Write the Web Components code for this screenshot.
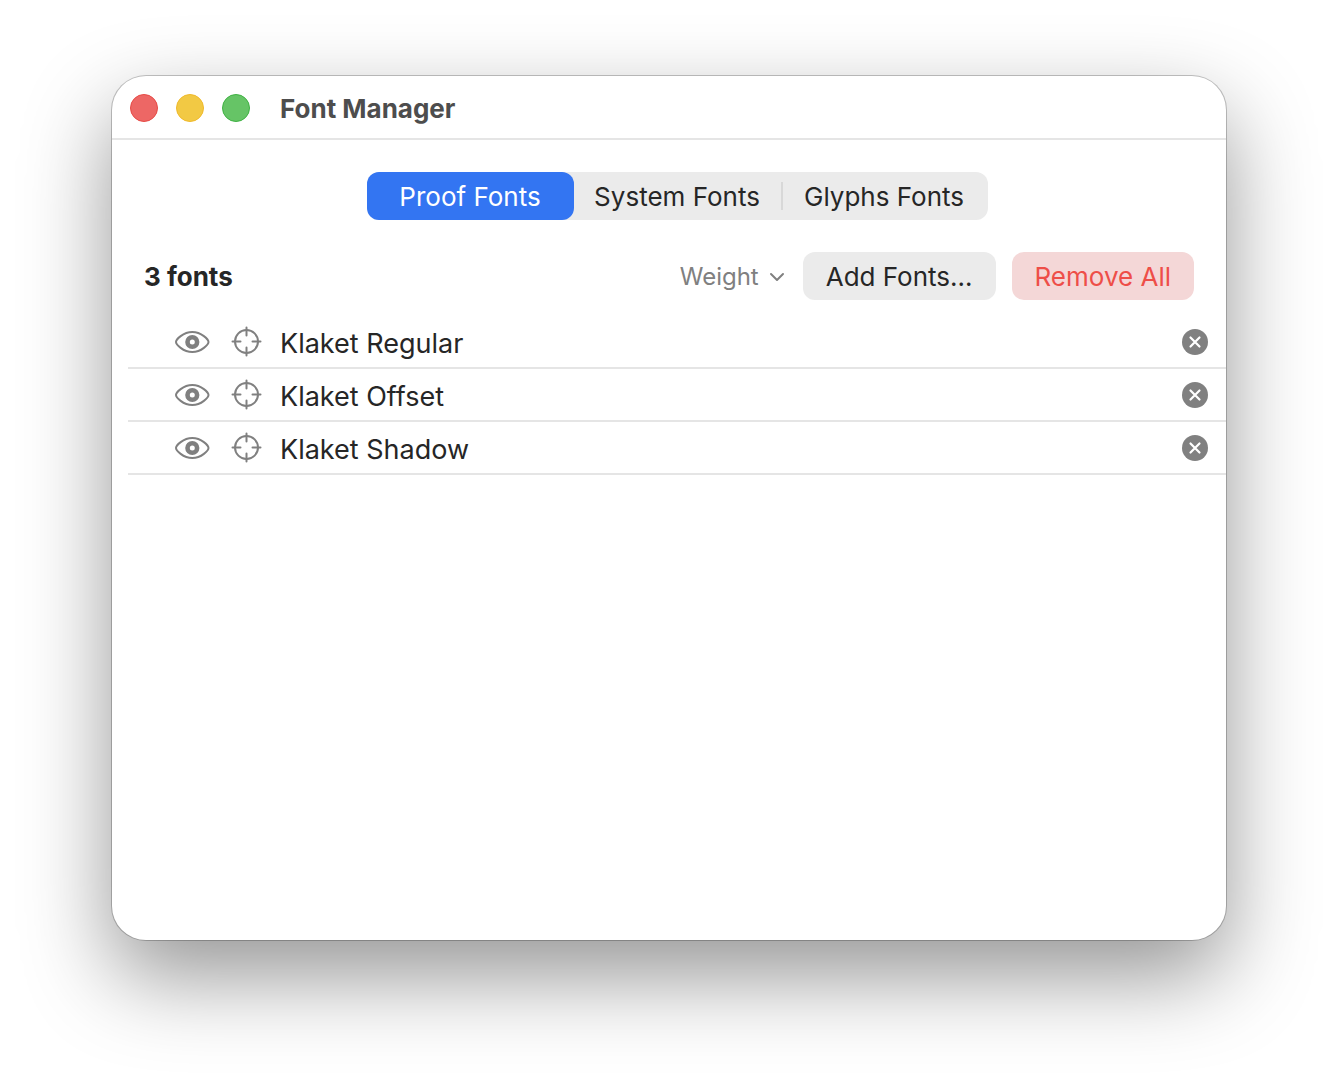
<!DOCTYPE html>
<html lang="en">
<head>
<meta charset="utf-8">
<title>Font Manager</title>
<style>
    html {
        height: 100%;
    }
    body {
        box-sizing: border-box;
        min-height: 100%;
        margin: 0;
        padding: 76px 112px 148px;
        display: flex;
        background: #fff;
        color: #262626;
        font: 26px/32px Inter, "Liberation Sans", sans-serif;
    }
</style>
</head>
<body>
<app-window heading="Font Manager">
    <segmented-control label="Font source">
        <segment-button selected>Proof Fonts</segment-button>
        <segment-button>System Fonts</segment-button>
        <segment-button divided>Glyphs Fonts</segment-button>
    </segmented-control>
    <font-toolbar>
        <span slot="count">3 fonts</span>
        <sort-select label="Sort fonts by" value="Weight"></sort-select>
        <push-button>Add Fonts…</push-button>
        <push-button kind="danger">Remove All</push-button>
    </font-toolbar>
    <font-list>
        <font-row>Klaket Regular</font-row>
        <font-row>Klaket Offset</font-row>
        <font-row>Klaket Shadow</font-row>
    </font-list>
</app-window>

<template id="app-window">
    <style>
        :host {
            flex: 1;
            min-width: 0;
            display: flex;
            flex-direction: column;
            border-radius: 34px;
            background: #fff;
            box-shadow: 0 0 0 1px rgba(0, 0, 0, .22), 0 36px 88px rgba(0, 0, 0, .42);
            overflow: hidden;
        }
        header {
            display: flex;
            align-items: center;
            height: 60px;
            padding: 2px 18px 0;
            border-bottom: 2px solid #e5e5e5;
        }
        .lights {
            display: flex;
            gap: 18px;
            margin-right: 30px;
        }
        .lights button {
            width: 28px;
            height: 28px;
            padding: 0;
            border: 1px solid #e64a46;
            border-radius: 50%;
            background: #ed6765;
        }
        .lights .minimize {
            border-color: #efb92b;
            background: #f2c944;
        }
        .lights .zoom {
            border-color: #3fb143;
            background: #66c466;
        }
        h1 {
            margin: 0;
            padding-top: 2px;
            color: #4d4d4d;
            font-size: 26px;
            font-weight: 700;
        }
        main {
            display: flex;
            flex-direction: column;
            padding: 32px 0 0 16px;
        }
    </style>
    <header>
        <div class="lights">
            <button class="close" aria-label="Close"></button>
            <button class="minimize" aria-label="Minimize"></button>
            <button class="zoom" aria-label="Zoom"></button>
        </div>
        <h1></h1>
    </header>
    <main><slot></slot></main>
</template>

<template id="segmented-control">
    <style>
        :host {
            display: grid;
            grid-auto-flow: column;
            grid-auto-columns: 207px;
            align-self: center;
            border-radius: 12px;
            background: #ebebeb;
        }
    </style>
    <slot></slot>
</template>

<template id="segment-button">
    <style>
        :host {
            display: flex;
            align-items: center;
        }
        :host([divided])::before {
            content: "";
            width: 2px;
            height: 28px;
            margin-right: -2px;
            background: #d8d8d8;
        }
        button {
            flex: 1;
            height: 48px;
            padding: 2px 0 0;
            border: 0;
            border-radius: 12px;
            background: none;
            color: inherit;
            font: inherit;
            white-space: nowrap;
        }
        :host([selected]) button {
            background: #3375f2;
            color: #fff;
        }
    </style>
    <button><slot></slot></button>
</template>

<template id="font-toolbar">
    <style>
        :host {
            display: flex;
            align-items: center;
            gap: 16px;
            padding: 32px 32px 16px 16px;
        }
        .count {
            flex: 1;
            padding-top: 2px;
            font-weight: 700;
        }
    </style>
    <div class="count"><slot name="count"></slot></div>
    <slot></slot>
</template>

<template id="sort-select">
    <style>
        :host {
            display: grid;
            align-items: center;
            color: #808080;
            font-size: 24px;
        }
        select,
        svg {
            grid-area: 1 / 1;
        }
        select {
            appearance: none;
            height: 48px;
            padding: 2px 28px 0 0;
            border: 0;
            background: none;
            color: inherit;
            font: inherit;
        }
        svg {
            justify-self: end;
            margin: 2px 2px 0 0;
            pointer-events: none;
        }
    </style>
    <select><option></option></select>
    <svg width="16" height="10" viewBox="0 0 16 10" fill="none" stroke="currentColor" stroke-width="2" stroke-linecap="round" stroke-linejoin="round">
        <path d="M2 2l6 6 6-6"/>
    </svg>
</template>

<template id="push-button">
    <style>
        :host {
            display: block;
        }
        button {
            height: 48px;
            padding: 2px 23px 0;
            border: 0;
            border-radius: 12px;
            background: #ebebeb;
            color: inherit;
            font: inherit;
            white-space: nowrap;
        }
        :host([kind="danger"]) button {
            background: #f4d7d7;
            color: #ee4e48;
        }
    </style>
    <button><slot></slot></button>
</template>

<template id="font-list">
    <style>
        :host {
            display: block;
        }
    </style>
    <slot></slot>
</template>

<template id="font-row">
    <style>
        :host {
            display: flex;
            align-items: center;
            height: 51px;
            padding: 0 18px 0 46px;
            border-bottom: 2px solid #e5e5e5;
            font-size: 27px;
        }
        button {
            display: flex;
            padding: 0;
            border: 0;
            background: none;
            color: #808080;
        }
        .target {
            margin: 0 18px 0 20px;
        }
        .name {
            flex: 1;
            padding-top: 4px;
        }
    </style>
    <button class="preview" aria-label="Preview">
        <svg width="36" height="32" viewBox="0 0 36 32" fill="none" stroke="currentColor" stroke-width="2">
            <path d="M2 16C2 13.6 9 6 18.300 6S34.500 13.600 34.500 16S27.600 26 18.300 26S2 18.400 2 16Z"/>
            <circle cx="18.300" cy="16" r="4.800" stroke-width="4.600"/>
        </svg>
    </button>
    <button class="target" aria-label="Target">
        <svg width="32" height="32" viewBox="0 0 32 32" fill="none" stroke="currentColor" stroke-width="2" stroke-linecap="round">
            <circle cx="16.500" cy="15.500" r="11.500"/>
            <path d="M16.500 1.500v8M16.500 21.500v8M2.500 15.500h8M22.500 15.500h8"/>
        </svg>
    </button>
    <span class="name"><slot></slot></span>
    <button class="remove" aria-label="Remove">
        <svg width="26" height="26" viewBox="0 0 26 26">
            <circle cx="13" cy="13" r="13" fill="currentColor"/>
            <path d="M8.500 8.500l9 9M17.500 8.500l-9 9" stroke="#fff" stroke-width="2.200" stroke-linecap="round"/>
        </svg>
    </button>
</template>

<script>
(() => {
    // attaches a shadow root holding a copy of the template named after the tag
    class TemplateElement extends HTMLElement {
        constructor() {
            super()
            const template = document.getElementById(this.localName)
            const shadowRoot = this.attachShadow({mode: 'open'})
            shadowRoot.appendChild(template.content.cloneNode(true))
        }
    }

    class AppWindow extends TemplateElement {
        connectedCallback() {
            this.shadowRoot.querySelector('h1').textContent = this.getAttribute('heading')
        }
    }

    class SegmentedControl extends TemplateElement {
        connectedCallback() {
            this.setAttribute('role', 'group')
            this.setAttribute('aria-label', this.getAttribute('label'))
            this.addEventListener('click', e => {
                const clicked = e.target.closest('segment-button')
                if (!clicked) {
                    return
                }
                for (const segment of this.children) {
                    segment.toggleAttribute('selected', segment === clicked)
                }
            })
        }
    }

    class SegmentButton extends TemplateElement {
        static get observedAttributes() {
            return ['selected']
        }
        connectedCallback() {
            this.update()
        }
        attributeChangedCallback() {
            this.update()
        }
        update() {
            this.shadowRoot.querySelector('button').setAttribute('aria-pressed', this.hasAttribute('selected'))
        }
    }

    class SortSelect extends TemplateElement {
        connectedCallback() {
            this.shadowRoot.querySelector('select').setAttribute('aria-label', this.getAttribute('label'))
            this.shadowRoot.querySelector('option').textContent = this.getAttribute('value')
        }
    }

    class FontList extends TemplateElement {
        connectedCallback() {
            this.setAttribute('role', 'list')
        }
    }

    class FontRow extends TemplateElement {
        connectedCallback() {
            this.setAttribute('role', 'listitem')
            this.shadowRoot.querySelector('.remove').addEventListener('click', () => this.remove())
        }
    }

    customElements.define('app-window', AppWindow)
    customElements.define('segmented-control', SegmentedControl)
    customElements.define('segment-button', SegmentButton)
    customElements.define('font-toolbar', class extends TemplateElement {})
    customElements.define('sort-select', SortSelect)
    customElements.define('push-button', class extends TemplateElement {})
    customElements.define('font-list', FontList)
    customElements.define('font-row', FontRow)
})()
</script>
</body>
</html>
